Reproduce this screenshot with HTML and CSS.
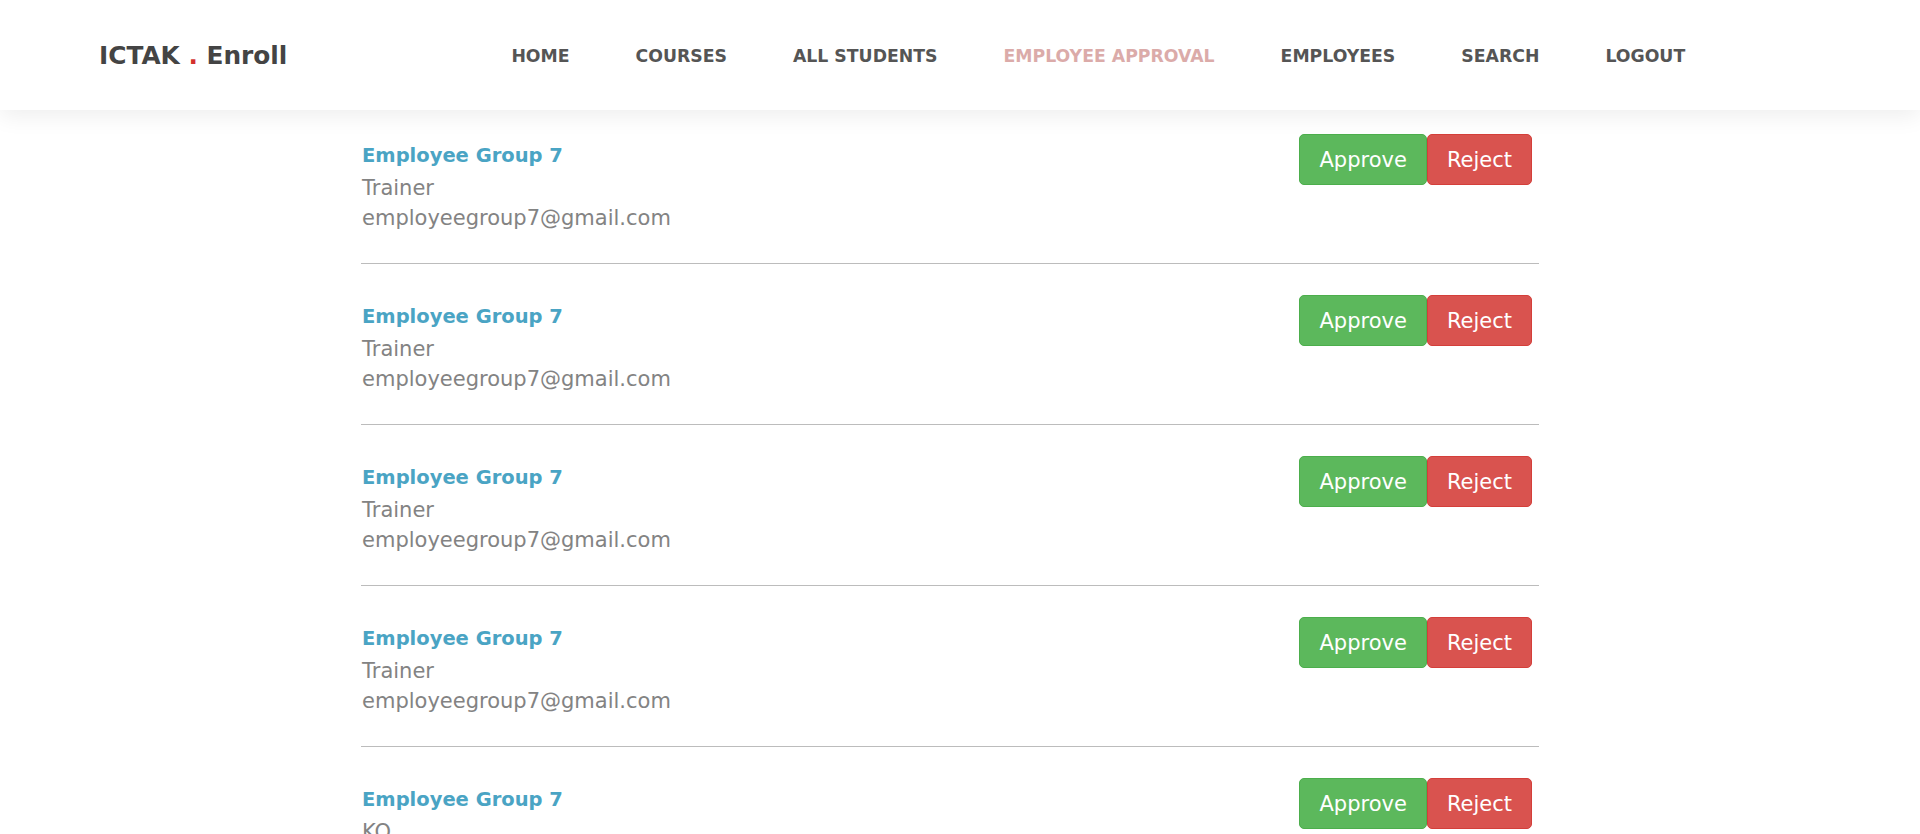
FILE: index.html
```html
<!DOCTYPE html>
<html lang="en">
<head>
<meta charset="utf-8">
<title>ICTAK . Enroll - Employee Approval</title>
<link rel="stylesheet" href="styles.css">
</head>
<body>
<header class="topbar">
  <a class="brand" href="#">ICTAK <span class="brand-dot">.</span> Enroll</a>
  <ul class="nav">
    <li><a class="nav-link" href="#">HOME</a></li>
    <li><a class="nav-link" href="#">COURSES</a></li>
    <li><a class="nav-link" href="#">ALL STUDENTS</a></li>
    <li><a class="nav-link active" href="#">EMPLOYEE APPROVAL</a></li>
    <li><a class="nav-link" href="#">EMPLOYEES</a></li>
    <li><a class="nav-link" href="#">SEARCH</a></li>
    <li><a class="nav-link" href="#">LOGOUT</a></li>
  </ul>
</header>
<main class="list">
  <div class="entry">
    <div class="info">
      <h4 class="name">Employee Group 7</h4>
      <p class="role">Trainer</p>
      <p class="email">employeegroup7@gmail.com</p>
    </div>
    <div class="actions">
      <button class="btn btn-approve">Approve</button>
      <button class="btn btn-reject">Reject</button>
    </div>
  </div>
  <div class="entry">
    <div class="info">
      <h4 class="name">Employee Group 7</h4>
      <p class="role">Trainer</p>
      <p class="email">employeegroup7@gmail.com</p>
    </div>
    <div class="actions">
      <button class="btn btn-approve">Approve</button>
      <button class="btn btn-reject">Reject</button>
    </div>
  </div>
  <div class="entry">
    <div class="info">
      <h4 class="name">Employee Group 7</h4>
      <p class="role">Trainer</p>
      <p class="email">employeegroup7@gmail.com</p>
    </div>
    <div class="actions">
      <button class="btn btn-approve">Approve</button>
      <button class="btn btn-reject">Reject</button>
    </div>
  </div>
  <div class="entry">
    <div class="info">
      <h4 class="name">Employee Group 7</h4>
      <p class="role">Trainer</p>
      <p class="email">employeegroup7@gmail.com</p>
    </div>
    <div class="actions">
      <button class="btn btn-approve">Approve</button>
      <button class="btn btn-reject">Reject</button>
    </div>
  </div>
  <div class="entry">
    <div class="info">
      <h4 class="name">Employee Group 7</h4>
      <p class="role">KO</p>
      <p class="email">employeegroup7@gmail.com</p>
    </div>
    <div class="actions">
      <button class="btn btn-approve">Approve</button>
      <button class="btn btn-reject">Reject</button>
    </div>
  </div>
</main>
</body>
</html>
```
FILE: styles.css
```css
html, body {
  margin: 0;
  padding: 0;
}
html {
  overflow: hidden;
}
body {
  font-family: "DejaVu Sans", "Liberation Sans", sans-serif;
  background: #ffffff;
}

.topbar {
  height: 110px;
  display: flex;
  align-items: center;
  padding-left: 99px;
  background: #ffffff;
  box-shadow: 0 6px 22px rgba(0, 0, 0, 0.07);
  position: relative;
  z-index: 2;
}
.brand {
  font-size: 24.8px;
  font-weight: 700;
  color: #444444;
  text-decoration: none;
  white-space: pre;
}
.brand-dot {
  color: #d3302c;
}
.nav {
  display: flex;
  gap: 66px;
  list-style: none;
  padding: 2px 0 0;
  margin: 0 0 0 224px;
}
.nav-link {
  font-size: 17.3px;
  font-weight: 700;
  color: #555555;
  text-decoration: none;
}
.nav-link.active {
  color: #dbaba9;
}

.list {
  width: 1178px;
  margin-left: 361px;
}
.entry {
  display: flex;
  justify-content: space-between;
  align-items: flex-start;
  padding: 31px 0 30px;
  border-bottom: 1px solid #bcbcbc;
}
.entry:first-child {
  padding-top: 24px;
}
.info {
  padding-left: 1px;
}
.name {
  margin: 0;
  padding-top: 8px;
  font-size: 19.5px;
  line-height: 28px;
  font-weight: 700;
  color: #4aa4c4;
}
.role {
  margin: 3px 0 0;
  font-size: 21px;
  line-height: 30px;
  color: #838383;
}
.email {
  margin: 0;
  font-size: 21px;
  line-height: 30px;
  color: #838383;
}
.actions {
  display: flex;
  margin-right: 7px;
}
.btn {
  font-family: inherit;
  font-size: 21px;
  height: 51px;
  padding: 0 19px;
  border-radius: 5px;
  color: #ffffff;
  border: 1px solid transparent;
  cursor: pointer;
}
.btn-approve {
  background: #5cb85c;
  border-color: #4cae4c;
}
.btn-reject {
  background: #d9534f;
  border-color: #d43f3a;
}
```
